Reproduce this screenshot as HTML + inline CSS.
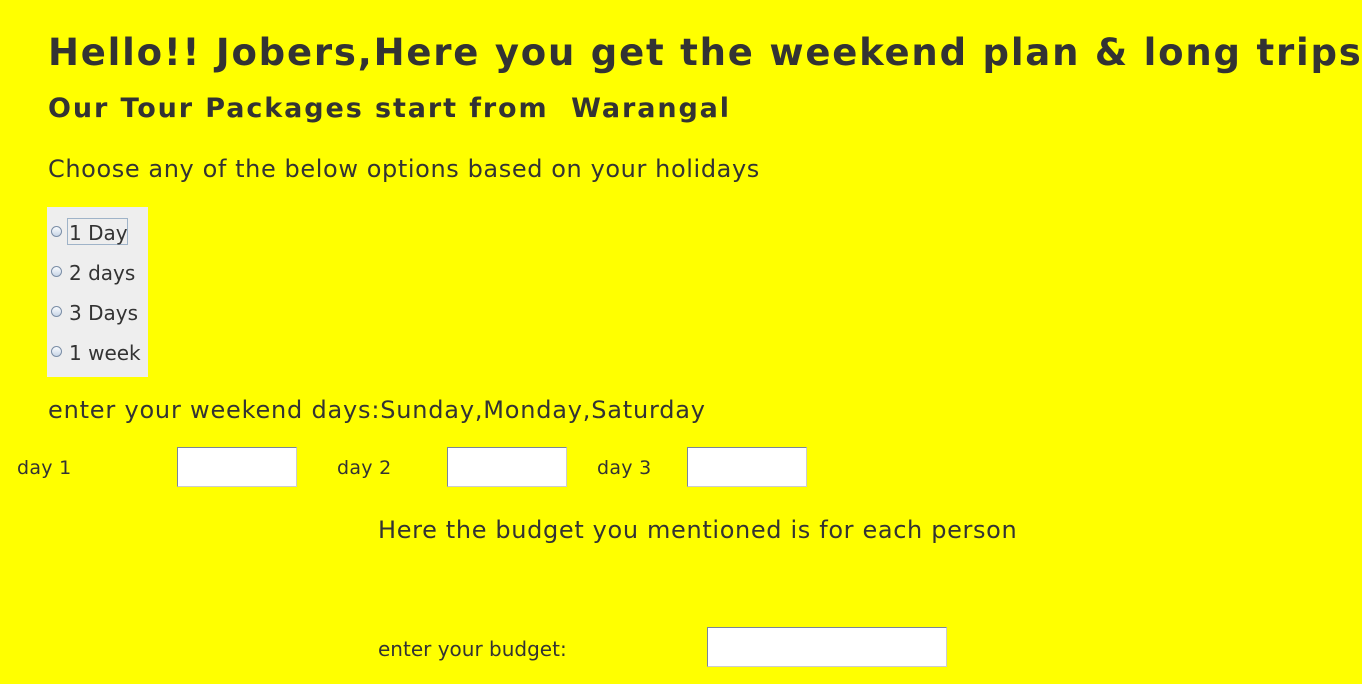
<!DOCTYPE html>
<html><head><meta charset="utf-8"><style>
html,body{margin:0;padding:0;}
body{width:1362px;height:684px;background:#ffff00;overflow:hidden;position:relative;font-family:"DejaVu Sans","Liberation Sans",sans-serif;color:#333;}
.a{position:absolute;white-space:nowrap;line-height:1;}
.in{position:absolute;background:#fff;border:1px solid #7a8699;border-right-color:#ccc;border-bottom-color:#ccc;box-sizing:border-box;}
.r{position:absolute;width:11px;height:11px;border-radius:50%;border:1px solid #7a8da6;background:linear-gradient(#fafcff,#c9d6e6);box-sizing:border-box;}
</style></head><body>
<div class="a" style="left:48px;top:34px;font-size:37px;font-weight:bold;letter-spacing:1.8px;">Hello!! Jobers,Here you get the weekend plan &amp; long trips</div>
<div class="a" style="left:48px;top:95px;font-size:27px;font-weight:bold;letter-spacing:1.9px;">Our Tour Packages start from &nbsp;Warangal</div>
<div class="a" style="left:48px;top:157px;font-size:24px;letter-spacing:0.6px;">Choose any of the below options based on your holidays</div>
<div style="position:absolute;left:47px;top:207px;width:101px;height:170px;background:#eeeeee;"></div>
<div class="r" style="left:51px;top:226px;"></div>
<div style="position:absolute;left:67px;top:218px;width:61px;height:27px;border:1px solid #9fb3c8;box-sizing:border-box;"></div>
<div class="a" style="left:69px;top:223px;font-size:20px;">1 Day</div>
<div class="r" style="left:51px;top:266px;"></div>
<div class="a" style="left:69px;top:263px;font-size:20px;">2 days</div>
<div class="r" style="left:51px;top:306px;"></div>
<div class="a" style="left:69px;top:303px;font-size:20px;">3 Days</div>
<div class="r" style="left:51px;top:346px;"></div>
<div class="a" style="left:69px;top:343px;font-size:20px;">1 week</div>
<div class="a" style="left:48px;top:398px;font-size:24px;letter-spacing:0.8px;">enter your weekend days:Sunday,Monday,Saturday</div>
<div class="a" style="left:17px;top:459px;font-size:19px;letter-spacing:0.3px;">day 1</div>
<div class="in" style="left:177px;top:447px;width:120px;height:40px;"></div>
<div class="a" style="left:337px;top:459px;font-size:19px;letter-spacing:0.3px;">day 2</div>
<div class="in" style="left:447px;top:447px;width:120px;height:40px;"></div>
<div class="a" style="left:597px;top:459px;font-size:19px;letter-spacing:0.3px;">day 3</div>
<div class="in" style="left:687px;top:447px;width:120px;height:40px;"></div>
<div class="a" style="left:378px;top:518px;font-size:24px;letter-spacing:0.65px;">Here the budget you mentioned is for each person</div>
<div class="a" style="left:378px;top:639px;font-size:20px;">enter your budget:</div>
<div class="in" style="left:707px;top:627px;width:240px;height:40px;"></div>
</body></html>
